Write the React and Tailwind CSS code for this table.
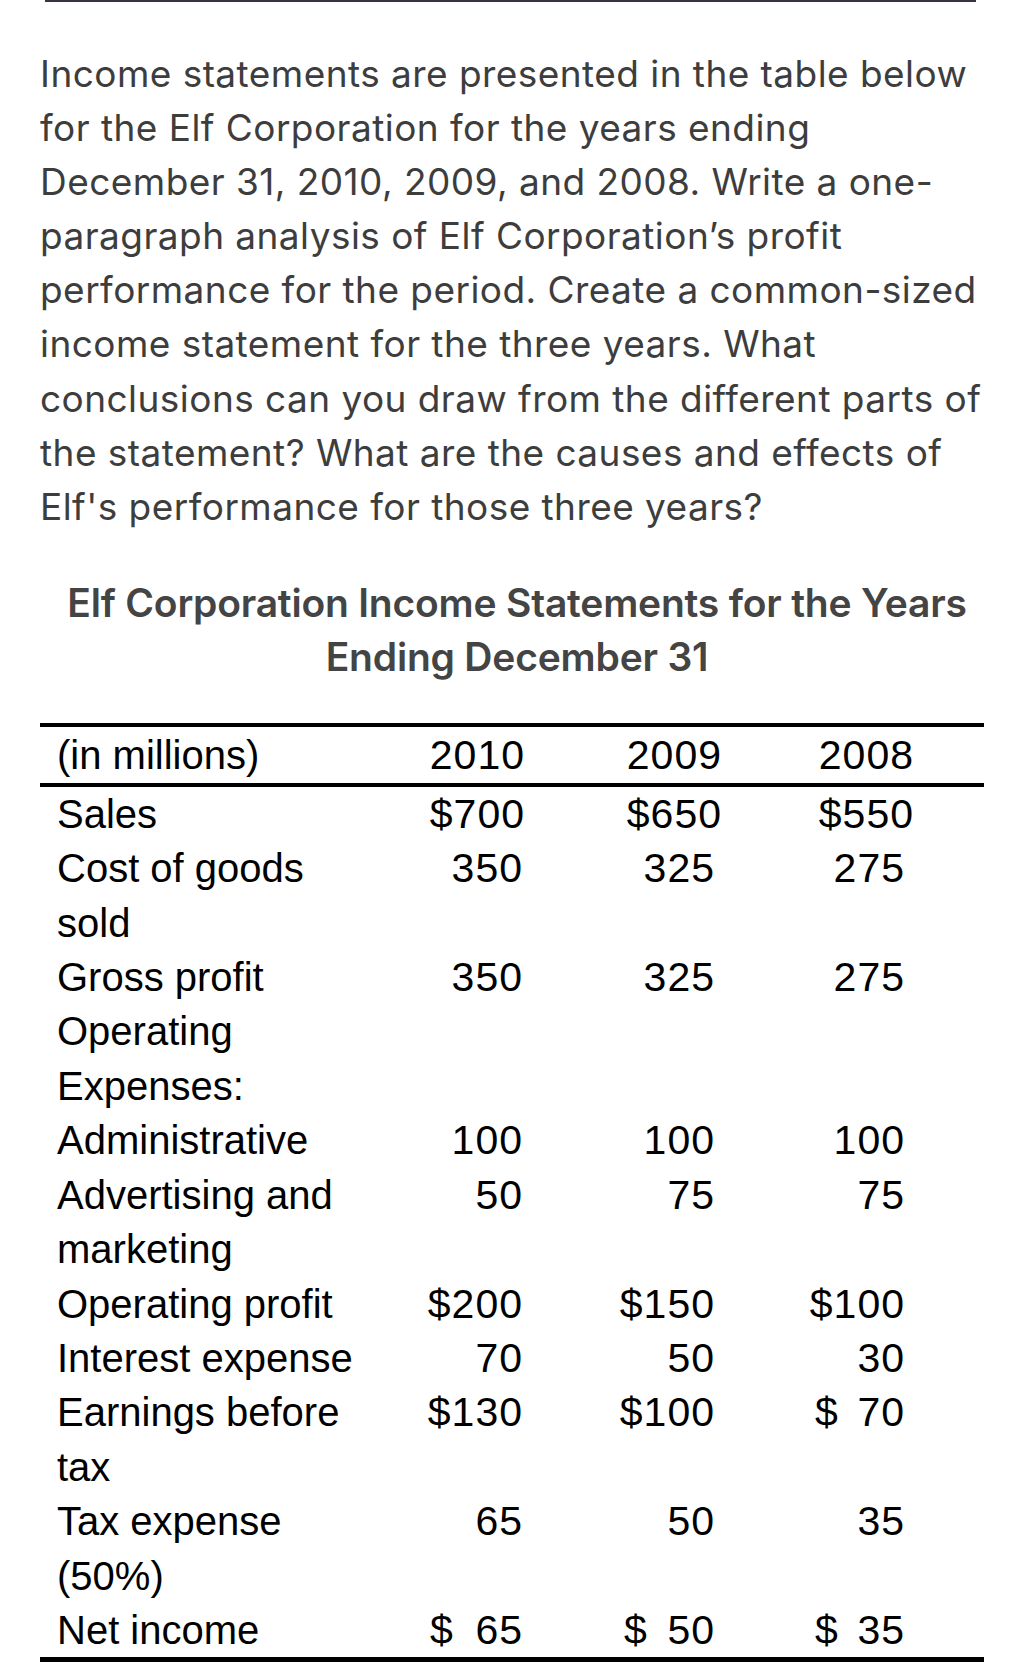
import React from "react";

const para = [
  "Income statements are presented in the table below",
  "for the Elf Corporation for the years ending",
  "December 31, 2010, 2009, and 2008. Write a one-",
  "paragraph analysis of Elf Corporation\u2019s profit",
  "performance for the period. Create a common-sized",
  "income statement for the three years. What",
  "conclusions can you draw from the different parts of",
  "the statement? What are the causes and effects of",
  "Elf's performance for those three years?",
];

// label lines, then the three year values ("$ 70" = dollar sign set apart)
const rows = [
  [["Sales"], ["$700", "$650", "$550"]],
  [["Cost of goods", "sold"], ["350", "325", "275"]],
  [["Gross profit"], ["350", "325", "275"]],
  [["Operating", "Expenses:"], ["", "", ""]],
  [["Administrative"], ["100", "100", "100"]],
  [["Advertising and", "marketing"], ["50", "75", "75"]],
  [["Operating profit"], ["$200", "$150", "$100"]],
  [["Interest expense"], ["70", "50", "30"]],
  [["Earnings before", "tax"], ["$130", "$100", "$ 70"]],
  [["Tax expense", "(50%)"], ["65", "50", "35"]],
  [["Net income"], ["$ 65", "$ 50", "$ 35"]],
];

const Num = ({ v, className, dollar = "" }) => {
  const spaced = v.startsWith("$ ");
  return (
    <div
      className={`flex shrink-0 whitespace-nowrap text-[41px] tracking-[1px] ${
        spaced ? "justify-between" : "justify-end"
      } ${className}`}
    >
      {spaced ? (
        <>
          <span className={dollar}>$</span>
          <span>{v.slice(2)}</span>
        </>
      ) : (
        <span>{v}</span>
      )}
    </div>
  );
};

// body rows sit a few px left of the header / sales figures
const Cells = ({ vals, body }) =>
  body ? (
    <>
      <Num v={vals[0]} className="w-[90px] pr-[2px]" dollar="-ml-[5px]" />
      <Num v={vals[1]} className="ml-[107px] w-[90px] pr-[7px]" dollar="-ml-[8px]" />
      <Num v={vals[2]} className="ml-[102px] w-[90px] pr-[9px]" dollar="-ml-[9px]" />
    </>
  ) : (
    <>
      <Num v={vals[0]} className="w-[90px]" />
      <Num v={vals[1]} className="ml-[107px] w-[90px]" />
      <Num v={vals[2]} className="ml-[102px] w-[90px]" />
    </>
  );

export default function App() {
  return (
    <div className="w-[1024px] h-[1678px] bg-white overflow-hidden">
      {/* rule at the very top */}
      <div className="ml-[45px] w-[931px] h-[2px] bg-[#3b3440]" />

      {/* question */}
      <div
        className="mt-[45px] pl-[40px] text-[37px] leading-[54.1px] text-[#3d3d3d] tracking-[0.45px]"
        style={{ fontFamily: "Inter, 'Noto Sans', sans-serif" }}
      >
        {para.map((l) => (
          <div key={l} className="whitespace-nowrap">
            {l}
          </div>
        ))}
      </div>

      {/* table title */}
      <div
        className="mt-[42px] pl-[10px] text-center font-semibold text-[39px] leading-[54px] text-[#444444] tracking-[-0.2px]"
        style={{ fontFamily: "Inter, 'Noto Sans', sans-serif" }}
      >
        <div>Elf Corporation Income Statements for the Years</div>
        <div>Ending December 31</div>
      </div>

      {/* table */}
      <div
        className="mt-[39px] ml-[40px] w-[944px] text-black text-[40px]"
        style={{ fontFamily: "'Liberation Sans', Arial, sans-serif" }}
      >
        <div className="h-[4px] bg-black" />
        <div className="flex h-[56px] items-center pl-[17px] leading-[58px]">
          <div className="w-[378px] shrink-0">(in millions)</div>
          <Cells vals={["2010", "2009", "2008"]} />
        </div>
        <div className="h-[4px] bg-black" />
        <div className="leading-[54.4px]">
          {rows.map(([label, vals], i) => (
            <div key={label[0]} className="flex items-start pl-[17px]">
              <div className="w-[378px] shrink-0 whitespace-nowrap">
                {label.map((l) => (
                  <div key={l}>{l}</div>
                ))}
              </div>
              <Cells vals={vals} body={i > 0} />
            </div>
          ))}
        </div>
        <div className="h-[5px] bg-black" />
      </div>
    </div>
  );
}
